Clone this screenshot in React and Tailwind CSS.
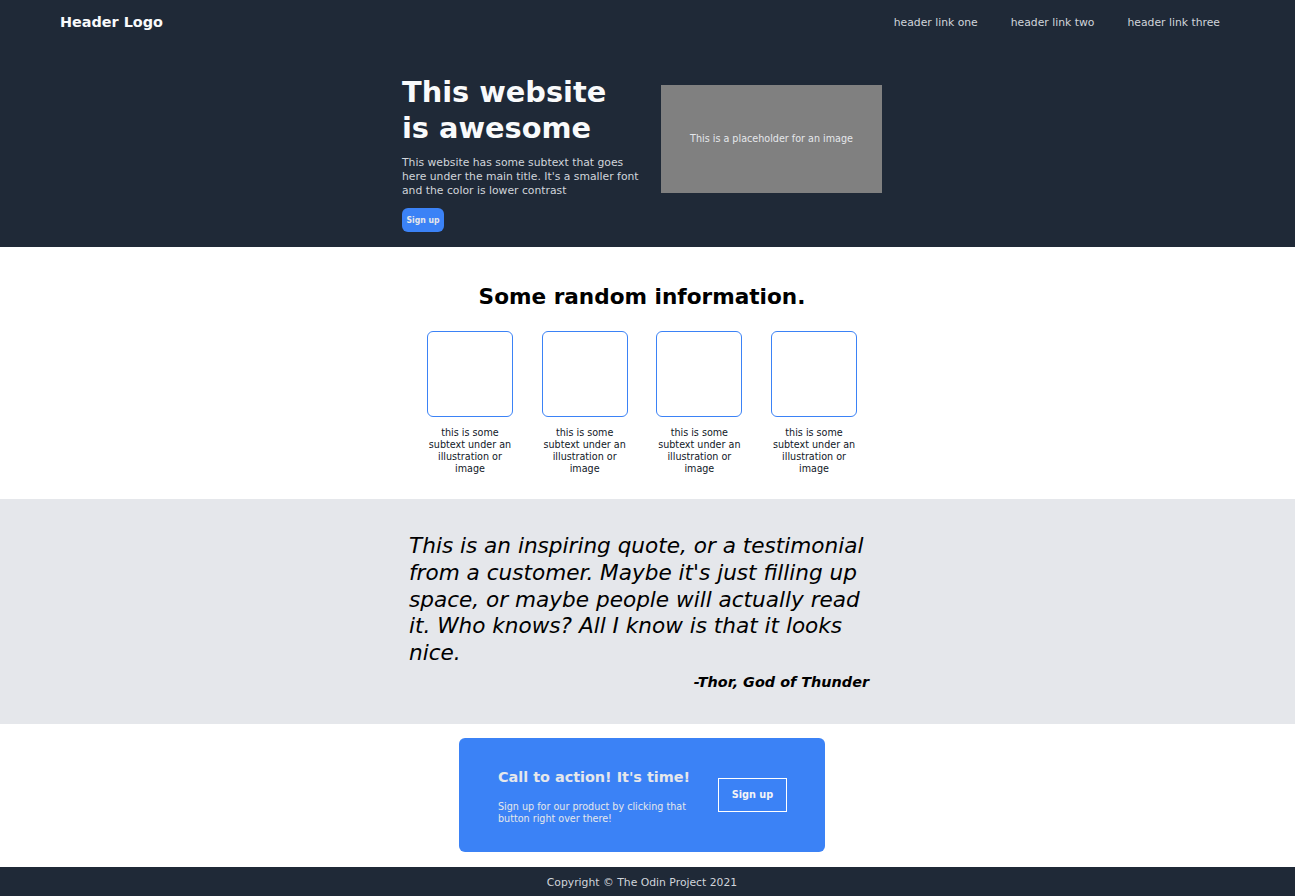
import React from "react";

const cards = [1, 2, 3, 4];

function App() {
  return (
    <div className="min-h-screen bg-white font-['DejaVu_Sans',sans-serif] text-black">
      {/* header + hero */}
      <div className="bg-[#1f2937]">
        <nav className="w-[1280px] h-[44px] pt-[2px] px-[60px] flex items-center justify-between">
          <div className="text-[14.4px] font-bold text-[#f9fafb]">Header Logo</div>
          <ul className="flex gap-[33px] text-[10.8px] text-[#d1d5db]">
            <li>header link one</li>
            <li>header link two</li>
            <li>header link three</li>
          </ul>
        </nav>
        <div className="w-[1284px] flex justify-center items-start gap-[19px] pt-[30px] pb-[15px]">
          <div className="w-[240px]">
            <h1 className="text-[28.8px] leading-[36px] font-bold text-[#f9fafb]">
              This website is awesome
            </h1>
            <p className="mt-[10px] text-[10.8px] leading-[14px] text-[#d1d5db]">
              This website has some subtext that goes here under the main title. It's a smaller font and the color is lower contrast
            </p>
            <button className="mt-[10px] w-[42px] h-[24px] rounded-[6px] bg-[#3b82f6] text-[8.6px] font-bold text-[#e5e7eb] font-['DejaVu_Sans_Condensed','DejaVu_Sans',sans-serif]">
              Sign up
            </button>
          </div>
          <div className="mt-[11px] w-[221px] h-[108px] bg-[#808080] flex items-center justify-center text-[9.6px] text-[#e5e7eb]">
            This is a placeholder for an image
          </div>
        </div>
      </div>

      {/* info */}
      <div className="w-[1284px] pt-[34px] pb-[24px] flex flex-col items-center">
        <h2 className="text-[21.6px] font-bold">Some random information.</h2>
        <div className="mt-[18px] flex gap-[28.7px]">
          {cards.map((c) => (
            <div key={c} className="w-[86px] flex flex-col items-center">
              <div className="w-[86px] h-[86px] rounded-[6px] border border-[#3b82f6]"></div>
              <p className="mt-[10px] text-[9.6px] leading-[12px] text-center text-[#111827]">
                this is some subtext under an illustration or image
              </p>
            </div>
          ))}
        </div>
      </div>

      {/* quote */}
      <div className="bg-[#e5e7eb]">
        <div className="w-[1284px] pt-[34px] pb-[30px] flex justify-center pr-[6px]">
          <div className="w-[460px]">
            <p className="text-[21.6px] leading-[26.6px] italic">
              This is an inspiring quote, or a testimonial from a customer. Maybe it's just filling up space, or maybe people will actually read it. Who knows? All I know is that it looks nice.
            </p>
            <p className="mt-[6px] text-right text-[14.4px] font-bold italic">-Thor, God of Thunder</p>
          </div>
        </div>
      </div>

      {/* call to action */}
      <div className="w-[1284px] pt-[14px] pb-[15px] flex justify-center">
        <div className="w-[366px] h-[114px] rounded-[6px] bg-[#3b82f6] pl-[39px] pr-[38px] flex items-center gap-[29px]">
          <div className="w-[191px] mt-[2px]">
            <h3 className="text-[14.4px] font-bold text-[#e5e7eb] whitespace-nowrap">Call to action! It's time!</h3>
            <p className="mt-[12px] text-[9.6px] leading-[12px] text-[#e5e7eb]">
              Sign up for our product by clicking that button right over there!
            </p>
          </div>
          <button className="w-[69px] h-[34px] border border-white text-[10.8px] font-bold text-[#f3f4f6] font-['DejaVu_Sans_Condensed','DejaVu_Sans',sans-serif]">
            Sign up
          </button>
        </div>
      </div>

      {/* footer */}
      <footer className="bg-[#1f2937] h-[29px]">
        <div className="w-[1284px] h-full pt-[3px] flex items-center justify-center text-[10.8px] text-[#d1d5db]">
          Copyright © The Odin Project 2021
        </div>
      </footer>
    </div>
  );
}

export default App;
